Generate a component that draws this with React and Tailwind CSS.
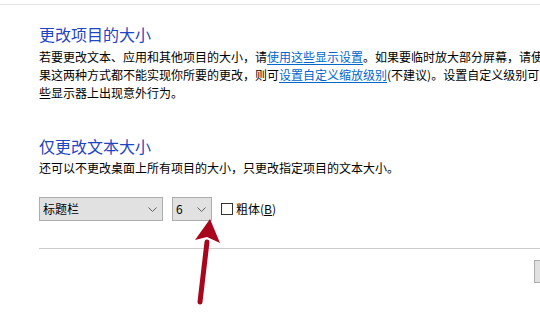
import React from 'react';

const Chevron = () => (
  <svg width="9" height="5" viewBox="0 0 9 5" className="shrink-0">
    <path d="M0.5 0.5 L4.5 4.5 L8.5 0.5" fill="none" stroke="#606060" strokeWidth="1" />
  </svg>
);

function Select({ value, width, chevronPad }) {
  return (
    <div
      className={`flex items-center justify-between h-[24px] ${width} border border-[#adadad] bg-[#e1e1e1] pl-[3px] ${chevronPad} text-[12px] text-black`}
    >
      <span>{value}</span>
      <Chevron />
    </div>
  );
}

export default function App() {
  return (
    <div className="relative w-[540px] h-[324px] overflow-hidden bg-white font-['Noto_Sans_CJK_SC','Microsoft_YaHei',sans-serif]">
      <div className="h-[4px]" />
      <div className="border-t border-[#e3e3e3]" />

      <div className="pl-[39px] pt-[18px]">
        {/* 更改项目的大小 */}
        <h2 className="text-[16px] leading-[22px] text-[#1f45c0] whitespace-nowrap">更改项目的大小</h2>
        <div className="mt-[3px] text-[12px] leading-[18px] text-black whitespace-nowrap">
          <div>
            若要更改文本、应用和其他项目的大小，请
            <span className="text-[#0066cc] underline underline-offset-2">使用这些显示设置</span>
            。如果要临时放大部分屏幕，请使用放大镜。如
          </div>
          <div>
            果这两种方式都不能实现你所要的更改，则可
            <span className="text-[#0066cc] underline underline-offset-2">设置自定义缩放级别</span>
            (不建议)。设置自定义级别可能会导致某
          </div>
          <div>些显示器上出现意外行为。</div>
        </div>

        {/* 仅更改文本大小 */}
        <h2 className="mt-[33px] text-[16px] leading-[22px] text-[#1f45c0] whitespace-nowrap">仅更改文本大小</h2>
        <div className="mt-[2px] text-[12px] leading-[18px] text-black whitespace-nowrap">
          还可以不更改桌面上所有项目的大小，只更改指定项目的文本大小。
        </div>

        <div className="mt-[20px] flex items-center">
          <Select value="标题栏" width="w-[124px]" chevronPad="pr-[5px]" />
          <div className="ml-[9px]">
            <Select value="6" width="w-[40px]" chevronPad="pr-[5px]" />
          </div>
          <div className="ml-[9px] w-[12px] h-[12px] border border-[#333333] bg-white" />
          <span className="ml-[3px] text-[12px] text-black whitespace-nowrap">
            粗体(<span className="underline underline-offset-1">B</span>)
          </span>
        </div>

        <div className="mt-[27px] border-t border-[#cccccc]" />

        <div className="mt-[11px] flex pl-[495px]">
          <div className="w-[80px] h-[23px] shrink-0 border border-[#adadad] bg-[#e1e1e1]" />
        </div>
      </div>

      {/* red arrow annotation */}
      <svg className="absolute left-0 top-0 pointer-events-none" width="540" height="324" viewBox="0 0 540 324">
        <line x1="200" y1="302" x2="207" y2="242" stroke="#a8061c" strokeWidth="5" strokeLinecap="round" />
        <polygon points="210,219 195,240 207,237 220,243" fill="#a8061c" />
      </svg>
    </div>
  );
}
